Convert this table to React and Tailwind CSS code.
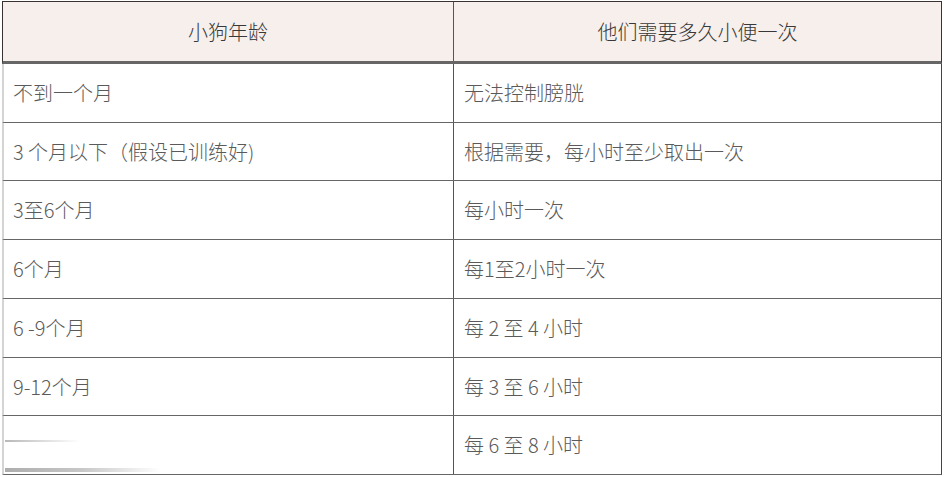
import React from "react";

const rows = [
  ["不到一个月", "无法控制膀胱", "h-[59px]"],
  ["3 个月以下（假设已训练好)", "根据需要，每小时至少取出一次", "h-[58px]"],
  ["3至6个月", "每小时一次", "h-[59px]"],
  ["6个月", "每1至2小时一次", "h-[59px]"],
  ["6 -9个月", "每 2 至 4 小时", "h-[59px]"],
  ["9-12个月", "每 3 至 6 小时", "h-[58px]"],
  ["", "每 6 至 8 小时", "h-[59px]"],
];

export default function App() {
  return (
    <div
      className="w-[945px] h-[477px] bg-white pt-px pl-[2px] relative overflow-hidden font-light"
      style={{ fontFamily: '"Noto Sans CJK SC", "Noto Sans", sans-serif' }}
    >
      <div className="w-[940px]">
        <div className="flex h-[63px] bg-[#f6efec] border-t border-l border-r border-[#3a3230] border-b-[3px] border-b-[#666]">
          <div className="w-[451px] border-r border-[#555] flex items-center justify-center text-[20px] text-[#383838]">
            小狗年龄
          </div>
          <div className="flex-1 flex items-center justify-center text-[20px] text-[#383838]">
            他们需要多久小便一次
          </div>
        </div>
        {rows.map(([a, b, h], i) => (
          <div
            key={i}
            className={`flex ${h} border-b border-[#666] border-l-2 border-l-[#d4d4d4] border-r border-r-[#444]`}
          >
            <div className="w-[450px] border-r border-[#555] flex items-center pl-[9px] text-[20px] text-[#5a5a5a]">
              {a}
            </div>
            <div className="flex-1 flex items-center pl-[10px] text-[20px] text-[#5a5a5a]">
              {b}
            </div>
          </div>
        ))}
      </div>
      <div className="absolute left-[5px] top-[440px] w-[75px] h-[2px] bg-gradient-to-r from-[#9a9a9a] to-transparent opacity-70" />
      <div className="absolute left-[5px] top-[468px] w-[155px] h-[4px] bg-gradient-to-r from-[#8a8a8a] via-[#b0b0b0] to-transparent opacity-70" />
    </div>
  );
}
